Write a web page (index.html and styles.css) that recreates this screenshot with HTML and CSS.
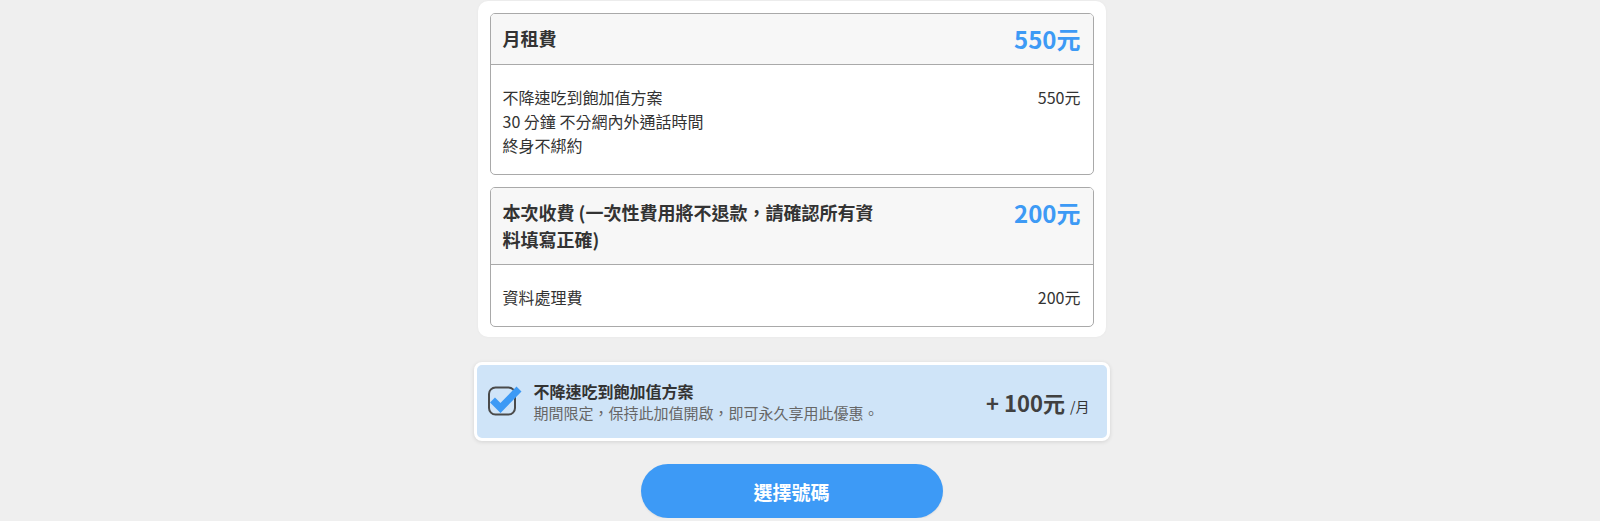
FILE: index.html
```html
<!DOCTYPE html>
<html lang="zh-Hant">
<head>
<meta charset="utf-8">
<title>選擇號碼</title>
<link rel="stylesheet" href="styles.css">
</head>
<body>
<main class="page">
  <div class="column">
    <section class="card">
      <div class="fee-box">
        <div class="fee-head">
          <div class="fee-title">月租費</div>
          <div class="fee-total">550元</div>
        </div>
        <div class="fee-body">
          <div class="fee-lines">
            <div>不降速吃到飽加值方案</div>
            <div>30 分鐘 不分網內外通話時間</div>
            <div>終身不綁約</div>
          </div>
          <div class="fee-amount">550元</div>
        </div>
      </div>
      <div class="fee-box">
        <div class="fee-head">
          <div class="fee-title">本次收費 (一次性費用將不退款，請確認所有資料填寫正確)</div>
          <div class="fee-total">200元</div>
        </div>
        <div class="fee-body">
          <div class="fee-lines">
            <div>資料處理費</div>
          </div>
          <div class="fee-amount">200元</div>
        </div>
      </div>
    </section>

    <section class="addon">
      <svg class="check" width="36" height="34" viewBox="0 0 36 34" aria-hidden="true">
        <rect x="3" y="3.5" width="26" height="27" rx="6.5" fill="none" stroke="#4a4a4a" stroke-width="2"/>
        <polyline points="6.5,16 14.5,24 33,5" fill="none" stroke="#3d9af5" stroke-width="7" stroke-linejoin="miter"/>
      </svg>
      <div class="addon-text">
        <div class="addon-title">不降速吃到飽加值方案</div>
        <div class="addon-sub">期間限定，保持此加值開啟，即可永久享用此優惠。</div>
      </div>
      <div class="addon-price">+ 100元 <span class="per">/月</span></div>
    </section>

    <div class="actions">
      <button class="primary" type="button">選擇號碼</button>
    </div>
  </div>
</main>
</body>
</html>
```

FILE: styles.css
```css
html, body {
  margin: 0;
  padding: 0;
  background: #efefef;
}
body {
  font-family: "Noto Sans CJK TC", "Noto Sans", sans-serif;
  color: #333;
}
.page {
  width: 1583px;
  padding-top: 1px;
}
.column {
  width: 636px;
  margin: 0 auto;
}
.card {
  margin: 0 4px;
  background: #fff;
  border-radius: 10px;
  padding: 12px 12px 10px;
  box-shadow: 0 0 3px rgba(0, 0, 0, 0.04);
}
.fee-box {
  border: 1px solid #a9a9a9;
  border-radius: 5px;
  overflow: hidden;
}
.fee-box + .fee-box {
  margin-top: 12px;
}
.fee-head {
  display: flex;
  justify-content: space-between;
  align-items: flex-start;
  background: #f7f7f7;
  border-bottom: 1px solid #a9a9a9;
  padding: 11px 12px;
}
.fee-title {
  width: 380px;
  font-size: 18px;
  font-weight: 700;
  line-height: 27px;
  color: #333;
}
.fee-total {
  font-size: 24px;
  font-weight: 700;
  line-height: 28px;
  color: #3d9af5;
}
.fee-body {
  display: flex;
  justify-content: space-between;
  align-items: flex-start;
  padding: 20px 12px 17px;
  font-size: 16px;
  line-height: 24px;
  color: #333;
}
.addon {
  margin-top: 25px;
  display: flex;
  align-items: center;
  height: 73px;
  padding: 0 17px 0 9px;
  background: #cfe4f8;
  border: 3px solid #fff;
  border-radius: 8px;
  box-shadow: 0 1px 4px rgba(0, 0, 0, 0.12);
}
.check {
  flex: none;
  display: block;
  margin-top: -1px;
}
.addon-text {
  flex: 1;
  margin-left: 12px;
}
.addon-title {
  font-size: 16px;
  font-weight: 700;
  line-height: 22px;
  color: #333;
}
.addon-sub {
  font-size: 15px;
  line-height: 22px;
  color: #666;
}
.addon-price {
  font-size: 22px;
  font-weight: 700;
  color: #404040;
  white-space: nowrap;
}
.per {
  font-size: 14px;
  font-weight: 400;
  color: #333;
}
.actions {
  display: flex;
  justify-content: center;
  margin-top: 23px;
}
.primary {
  width: 302px;
  height: 54px;
  border: none;
  border-radius: 27px;
  background: #3d9af6;
  color: #fff;
  font-family: "Noto Sans CJK TC", "Noto Sans", sans-serif;
  font-size: 19px;
  font-weight: 700;
  box-shadow: 0 1px 2px rgba(0, 0, 0, 0.08);
  cursor: pointer;
}
```
